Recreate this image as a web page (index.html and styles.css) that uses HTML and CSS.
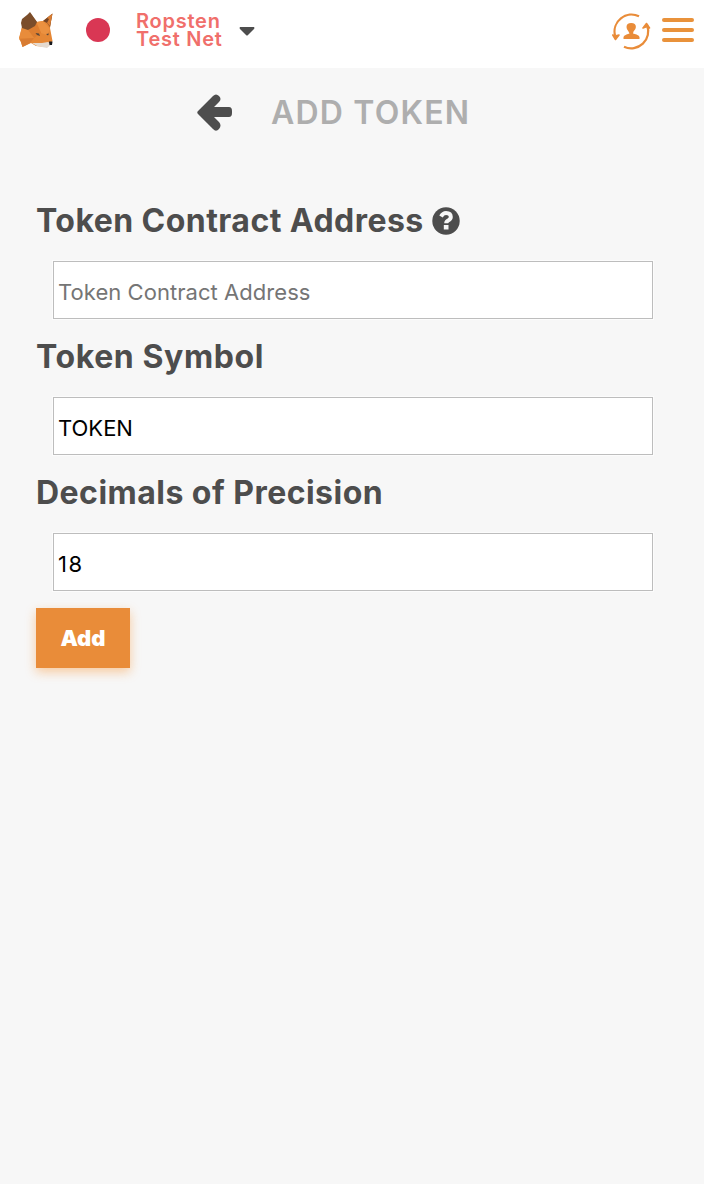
FILE: index.html
```html
<!DOCTYPE html>
<html lang="en">
<head>
<meta charset="utf-8">
<title>Add Token</title>
<link rel="stylesheet" href="styles.css">
</head>
<body>
<header class="bar">
  <svg class="fox" viewBox="0 0 36 40" aria-hidden="true">
    <path fill="#e58735" d="M11 4 18 13 24 12 33 5 31 19 33.500 32 28 38 17 37 12 34 3.500 38 2 33 0 30 3 18z"/>
    <path fill="#eb9140" d="M17.500 13 24 12 31 20 28 26 22 24z"/>
    <path fill="#dd7e30" d="M9 21 17.500 14 22 24 15 29z"/>
    <path fill="#e88c3b" d="M3 18 9 21 15 29 0 29z"/>
    <path fill="#d87c32" d="M1 30 15 29 11 34 3.500 38z"/>
    <path fill="#7b4d2a" d="M11 3 18 13 16 17 9 21 3 19 2 14 3 10 8 6z"/>
    <path fill="#744526" d="M33.500 4.500 31 18 28 14 24 12z"/>
    <path fill="#d97d32" d="M33.500 4.500 28 9 30 10 28 14 31 17z"/>
    <path fill="#e5dacf" d="M13 34 23 34 29 33 33 35 28 39 18 37z"/>
    <path fill="#59473a" d="M16.500 24 20 24.500 21 27 18 26zM27 25 30 24.500 29 26.500z"/>
    <path fill="#17191d" d="M30 32.500h3.500l-.5 3.500h-2.500z"/>
  </svg>
  <span class="dot"></span>
  <div class="network"><span class="net-a">Ropsten</span><span class="net-b">Test Net</span></div>
  <svg class="caret" viewBox="0 0 16 9" aria-hidden="true"><path d="M1 0h14q1 1 0 2L9 8Q8 9 7 8L1 2Q0 1 1 0z"/></svg>
  <svg class="switch" viewBox="0 0 40 38" aria-hidden="true">
    <g fill="none" stroke="#e98c39" stroke-width="2.2">
      <path d="M27 3.300A17 17 0 0 0 3 22.500"/><path d="M12 33.700A17 17 0 0 0 35 12"/>
    </g>
    <path fill="#e98c39" stroke="#e98c39" stroke-width="1.600" stroke-linejoin="round" d="M.8 22 3 23 7 22 3.500 26.500zM31 15 34.500 10.500 37.500 15 35 13.500z"/>
    <path fill="#e98c39" d="M11.500 26V24Q11.500 22.500 14.500 21.500L17.500 20.500 16.500 18.500Q14.500 16.500 14.500 14Q14.500 10 19.200 10T23.900 14Q23.900 16.500 21.500 18.500L21 20.500 24.500 21.500Q27.500 22.500 27.500 24V26z"/>
  </svg>
  <div class="menu"><i></i><i></i><i></i></div>
</header>
<main>
  <div class="title">
    <svg class="back" viewBox="0 0 36 38" aria-hidden="true"><path d="M1 17 16 2Q19-1 22 2T22 8L17 13H32Q35 13 35 17V19Q35 23 32 23H17L22 28Q25 31.500 22 35T16 35L1 20Q-.5 18.500 1 17z"/></svg>
    <h2>ADD TOKEN</h2>
  </div>
  <form class="form">
    <label class="label"><span class="l1">Token Contract Address</span>
      <svg class="help" viewBox="0 0 28 28" aria-hidden="true"><circle cx="14" cy="14" r="13.700" fill="#4d4d4d"/><path d="M9 9.500Q11 6 14 6Q18.800 6 18.800 10Q18.800 12 16.500 13.300Q14.200 14.500 14.200 16.300" fill="none" stroke="#f7f7f7" stroke-width="4"/><path fill="#f7f7f7" d="M11.800 18h4.700v4.500h-4.700z"/></svg>
    </label>
    <input class="field f1" placeholder="Token Contract Address">
    <label class="label"><span class="l2">Token Symbol</span></label>
    <input class="field f2" value="TOKEN">
    <label class="label"><span class="l3">Decimals of Precision</span></label>
    <input class="field f3" value="18">
    <button class="add" type="button">Add</button>
  </form>
</main>
</body>
</html>
```
FILE: styles.css
```css
* { box-sizing: border-box; }
body { margin: 0; min-height: 1184px; background: #f7f7f7; color: #4d4d4d; font-family: Inter, sans-serif; }
.bar { display: flex; align-items: flex-start; height: 68px; background: #fff; }
.fox { width: 36px; height: 40px; margin: 9px 0 0 19px; }
.dot { width: 24px; height: 24px; margin: 18px 0 0 31px; border-radius: 50%; background: #d93754; }
.network { display: flex; flex-direction: column; width: 88px; margin: 12px 0 0 26px; color: #f06f6b; font-size: 20px; font-weight: 600; line-height: 18px; letter-spacing: .75px; white-space: nowrap; }
.caret { width: 16px; height: 9px; margin: 27px 0 0 15px; fill: #4d4d4d; }
.switch { width: 40px; height: 38px; margin: 13px 0 0 auto; }
.menu { display: flex; flex-direction: column; gap: 6px; width: 32px; margin: 18px 10px 0 10px; }
.menu i { height: 4px; border-radius: 2px; background: #e9923b; }
.title { display: flex; align-items: center; height: 88px; padding: 2px 0 0 197px; }
.back { width: 36px; height: 38px; fill: #4d4d4d; }
.title h2 { margin: 0 0 0 38px; color: #aeaeae; font-size: 32px; font-weight: 600; line-height: 40px; letter-spacing: 1.2px; white-space: nowrap; }
.form { display: flex; flex-direction: column; align-items: flex-start; padding: 44px 36px 0; }
.label { display: flex; align-items: center; height: 42px; font-size: 32px; font-weight: 700; line-height: 42px; white-space: nowrap; }
.l1 { letter-spacing: .45px; }
.l2 { letter-spacing: .6px; }
.l3 { letter-spacing: .47px; }
.help { width: 28px; height: 28px; margin-left: 8px; }
.field { width: 600px; height: 58px; margin: 19px 0 17px 17px; padding: 3px 4px 0; border: 1px solid #bdbdbd; border-radius: 0; outline: 0; box-shadow: 0 0 0 1px #fcfcfc; background: #fff; color: #000; font-family: Inter, sans-serif; font-size: 22px; }
.f1 { letter-spacing: .05px; }
.f3 { letter-spacing: 1.5px; }
.field::placeholder { color: #757575; opacity: 1; }
.add { width: 94px; height: 60px; padding: 0; border: 0; background: #e98c39; box-shadow: 0 4px 10px rgba(247, 134, 28, .4); color: #fff; font: 900 22px/60px Inter, sans-serif; }
```
